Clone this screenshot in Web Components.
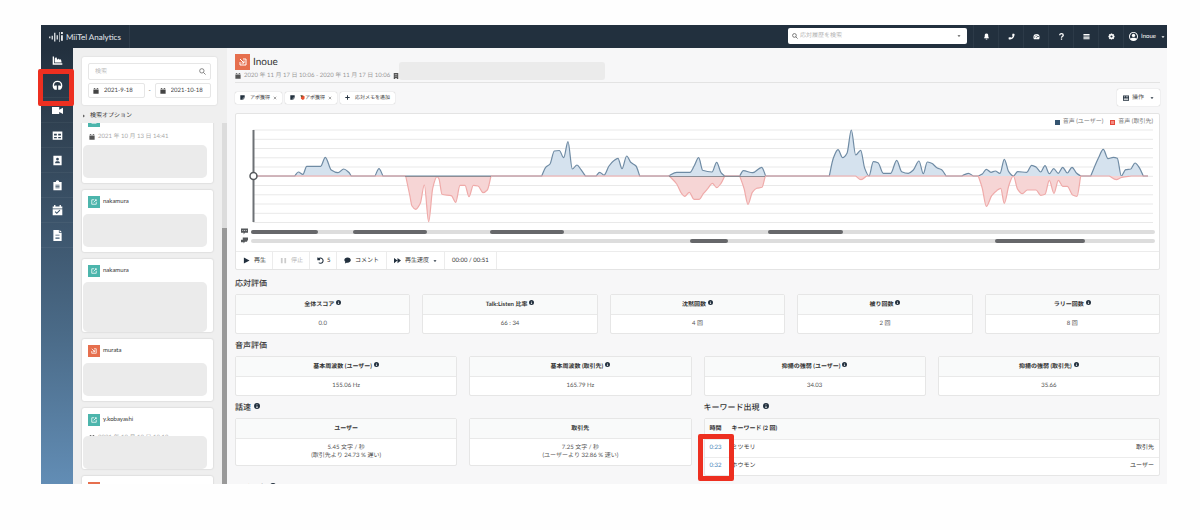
<!DOCTYPE html>
<html lang="ja">
<head>
<meta charset="utf-8">
<title>MiiTel Analytics</title>
<style>
body{margin:0;background:#fefefe;color:#333;font:6px/10px Lato,"Noto Sans CJK JP",sans-serif;text-rendering:geometricPrecision}
</style>
</head>
<body>
<analytics-page>
  <app-topbar slot="top"></app-topbar>
  <app-rail slot="rail"></app-rail>
  <call-list slot="list">
    <call-card date="2021 年 10 月 13 日 14:41"></call-card>
    <call-card name="nakamura"></call-card>
    <call-card name="nakamura" size="tall"></call-card>
    <call-card name="murata" kind="in"></call-card>
    <call-card name="y.kobayashi" date="2021 年 10 月 13 日 13:18" size="low"></call-card>
    <call-card name="murata" kind="in"></call-card>
  </call-list>
  <call-header></call-header>
  <call-tags></call-tags>
  <call-player></call-player>
  <metric-section label="応対評価">
    <metric-card label="全体スコア" info>0.0</metric-card>
    <metric-card label="Talk:Listen 比率" info>66 : 34</metric-card>
    <metric-card label="沈黙回数" info>4 回</metric-card>
    <metric-card label="被り回数" info>2 回</metric-card>
    <metric-card label="ラリー回数" info>8 回</metric-card>
  </metric-section>
  <metric-section label="音声評価">
    <metric-card label="基本周波数 (ユーザー)" info>155.06 Hz</metric-card>
    <metric-card label="基本周波数 (取引先)" info>165.79 Hz</metric-card>
    <metric-card label="抑揚の強弱 (ユーザー)" info>34.03</metric-card>
    <metric-card label="抑揚の強弱 (取引先)" info>35.66</metric-card>
  </metric-section>
  <split-row>
    <metric-section label="話速" info>
      <metric-card label="ユーザー">5.45 文字 / 秒<br>(取引先より 24.73 % 遅い)</metric-card>
      <metric-card label="取引先">7.25 文字 / 秒<br>(ユーザーより 32.86 % 速い)</metric-card>
    </metric-section>
    <metric-section label="キーワード出現" info>
      <keyword-table></keyword-table>
    </metric-section>
  </split-row>
  <metric-section label="コメント" info></metric-section>
</analytics-page>

<script>
const ICONS = {
  area:'<path d="M1 2v12h14v-2H3V2zM4 11V5l2-2 2 4 2-2 1 2 2-1 1 5z"/>',
  headset:'<path d="M8 1a7 7 0 0 0-7 7c0 3 1 5 3 6h3V8H5v0c-1 0-1 0-2 1V8a5 5 0 0 1 10 0v1c-1-1-1-1-2-1H9v6h3c2-1 3-3 3-6a7 7 0 0 0-7-7z"/>',
  video:'<path d="M0 3h10.500v4L16 4v9l-5.500-3v3H0z"/>',
  table:'<path fill-rule="evenodd" d="M1 2h14v12H1zM3 5.500v2.500h4V5.500zm6 0v2.500h4V5.500zM3 10v2h4v-2zm6 0v2h4v-2z"/>',
  contact:'<path fill-rule="evenodd" d="M2 1h12v14H2zM8 4a2 2 0 1 0 0 4 2 2 0 0 0 0-4zM4.500 12h7c0-2-1-3-2-3h-3c-1 0-2 1-2 3z"/>',
  clipboard:'<path fill-rule="evenodd" d="M2 3h3.500a2.500 2.500 0 0 1 5 0H14v12H2zM5 7v1h6V7zm0 2v1h6V9zm0 2v1h6v-1z"/>',
  check:'<path fill-rule="evenodd" d="M3 2V0h2v2h6V0h2v2h2v3H1V2zM1 6h14v9H1zM5 9l-1 1 3 3 5-5-1-1-4 4z"/>',
  file:'<path fill-rule="evenodd" d="M2 0h8v4h4v12H2zM5 7v1h6V7zm0 3v1h6v-1zm0 2v1h6v-1z"/><path d="M11 0l3 3h-3z"/>',
  calendar:'<path d="M3 2V0h2v2h6V0h2v2h2v2H1V2zM1 5h14v10H1z"/>',
  search:'<path fill="none" stroke="currentColor" stroke-width="2" d="M6.500 1.500a5 5 0 1 1 0 10 5 5 0 0 1 0-10zM10 10l5 5"/>',
  bell:'<path d="M8 1c4 0 4 3 4 6s1 3 2 5H2c1-2 2-2 2-5s0-6 4-6zM6 13h4a2 2 0 0 1-4 0z"/>',
  phone:'<path d="M11 1l4 1c0 8-5 13-13 13l-1-4 4-2 2 2c2-1 3-2 4-4L9 5z"/>',
  gauge:'<path fill-rule="evenodd" d="M8 2a7 7 0 0 0-7 7c0 2 0 3 1 5h12c1-2 1-3 1-5a7 7 0 0 0-7-7zM3 8h2v2H3zm3-4h2v2H6zm5 3h2v2h-2zM7 12l3-6 1 .500-2 5z"/>',
  bars:'<path d="M1 2h14v3H1zm0 4h14v2H1zm0 3h14v2H1zm0 3h14v2H1z"/>',
  gear:'<path fill-rule="evenodd" d="M6.500 1h3l.500 2 2-1 2 2-1 2 2 .500v3L13 10l1 2-2 2-2-1-.500 2h-3L6 13l-2 1-2-2 1-2-2-.500v-3L3 6 2 4l2-2 2 1zM8 5.500a2.500 2.500 0 1 0 0 5 2.500 2.500 0 0 0 0-5z"/>',
  help:'<path fill="none" stroke="currentColor" stroke-width="3" d="M4 5c0-5 8-4 8 0 0 3-4 2-4 6"/><path d="M6.500 12.500h3v3h-3z"/>',
  user:'<path fill-rule="evenodd" d="M8 0a8 8 0 1 0 0 16A8 8 0 0 0 8 0zm0 1.500a6.500 6.500 0 0 1 5 10.500c-1-2-2-2-5-2s-4 0-5 2A6.500 6.500 0 0 1 8 1.500z"/><circle cx="8" cy="6" r="3"/>',
  caret:'<path d="M2 5h12l-6 7z"/>',
  right:'<path d="M5 2l6 6-6 6z"/>',
  note:'<path d="M1 1h14v8h-6v6H1zM10 15v-5h5z"/>',
  plus:'<path d="M6.500 1h3v5.500H15v3H9.500V15h-3V9.500H1v-3h5.500z"/>',
  close:'<path fill="none" stroke="currentColor" stroke-width="3" d="M3 3l10 10M13 3L3 13"/>',
  play:'<path d="M2 1l13 7-13 7z"/>',
  pause:'<path d="M2 2h4v12H2zm8 0h4v12h-4z"/>',
  undo:'<path fill="none" stroke="currentColor" stroke-width="2.500" d="M2 1v5h5M3 5a6 6 0 1 1 1 8"/>',
  comment:'<path d="M8 1c10 0 10 12 0 12l-2 0-4 2 1-4C-2 7 2 1 8 1z"/>',
  fast:'<path d="M0 2l8 6-8 6zM8 2l8 6-8 6z"/>',
  info:'<path fill-rule="evenodd" d="M8 0a8 8 0 1 0 0 16A8 8 0 0 0 8 0zM7 3h2v2H7zM6 7h3v4h1v2H6v-2h1V8H6z"/>',
  building:'<path fill-rule="evenodd" d="M2 0h12v16h-4v-3H6v3H2zM5 3v2h2V3zm4 0v2h2V3zM5 7v2h2V7zm4 0v2h2V7z"/>',
  panel:'<path fill-rule="evenodd" d="M0 1h16v14H0zM2 4v2h4V4zm6 0v2h6V4zM2 8v1h12V8zm0 3v2h12v-2z"/>',
  say:'<path fill-rule="evenodd" d="M0 1h16v10H9l-3 4v-4H0zM3 5v2h2V5zm4 0v2h2V5zm4 0v2h2V5z"/>',
  reply:'<path d="M4 1h12v7h-2v3H9l-3 4v-3H0V6h4z"/>',
  out:'<path fill="none" stroke="currentColor" stroke-width="2" d="M8 2H2v12h12V8M10 2h4v4M14 2L7 9"/>',
  in:'<path fill="none" stroke="currentColor" stroke-width="2" d="M8 2h6v12H2V8M2 2l8 8M10 5v5H5"/>',
  apple:'<path fill="#e8502f" d="M3 3l6-2 6 4-1 8-5 3-6-4z"/><path fill="#4b5d3a" d="M1 1l6 0 2 4-5 1z"/>',
  wave:'<path d="M0 7h2v3H0zM4 6h2v6H4zM8 1h2v14H8zM12 5h2v7h-2zM16 0h1v16h-1zM19 5h3v9h-3zM19 0h3v3h-3z"/>'
};
const icon = (name, cls = '') => `<svg class="i ${cls}" viewBox="0 0 ${name === 'wave' ? 22 : 16} 16" fill="currentColor" aria-hidden="true">${ICONS[name]}</svg>`;
const BASE = `*,:host{box-sizing:border-box}
  .i{display:block;width:6px;height:6px;flex:none}
  button,input{font:inherit;color:inherit;margin:0;border:0;background:none;padding:0;text-rendering:inherit}
  button{display:flex;align-items:center;cursor:pointer;white-space:nowrap}
  input{outline:0;min-width:0;width:100%}
  a{color:inherit;text-decoration:none}`;
const define = (tag, render) => customElements.define(tag, class extends HTMLElement {
  constructor(){ super(); this.attachShadow({mode:'open'}); }
  connectedCallback(){
    const t = document.createElement('template');
    const [css, html] = render(this);
    t.innerHTML = `<style>${BASE}${css}</style>${html}`;
    this.shadowRoot.replaceChildren(t.content.cloneNode(true));
  }
});

define('analytics-page', () => [`
  :host{display:grid;height:100vh;padding:25px 33px 46px 41px;grid-template:23px minmax(0,1fr)/32px 154px minmax(0,1fr)}
  .top{grid-column:1/-1}
  .rail,.list{display:grid;min-height:0;grid-template-rows:minmax(0,1fr)}
  .rail{position:relative;z-index:1}
  main{background:#f7f7f8;padding:0 7px 0 8px;overflow:hidden;min-height:0}`,
  `<div class="top"><slot name="top"></slot></div><div class="rail"><slot name="rail"></slot></div><div class="list"><slot name="list"></slot></div><main><slot></slot></main>`]);

define('app-topbar', () => [`
  :host{display:flex;height:23px;background:#22303e;color:#fff;align-items:stretch}
  .brand{display:flex;align-items:center;gap:3px;width:89px;padding-left:8px;font-size:8px;border-right:1px solid #2e3c4a;color:#e8ebee}
  .brand .i{width:14px;height:10px}
  .find{display:flex;align-items:center;gap:2px;width:179px;height:16px;margin:3px 6px auto auto;background:#fff;border-radius:2px;padding:0 6px 0 4px;color:#555}
  .find input::placeholder{color:#b5b5b5;opacity:1}
  .find .c{width:4px;height:4px}
  nav{display:flex}
  nav button{width:25px;justify-content:center;border-left:1px solid #2c3a48}
  nav .i{width:7px;height:7px}
  nav .user{width:44px;gap:3px;padding-left:3px}
  nav .user .i{width:9px;height:9px}
  nav .user .c{width:4px;height:4px;margin-left:2px}`,
  `<a class="brand" href="#">${icon('wave')}MiiTel Analytics</a>
  <label class="find">${icon('search')}<input aria-label="応対履歴を検索" placeholder="応対履歴を検索">${icon('caret','c')}</label>
  <nav>${[['bell','通知'],['phone','電話'],['gauge','状況'],['help','ヘルプ'],['bars','メニュー'],['gear','設定']].map(([n,l])=>`<button aria-label="${l}">${icon(n)}</button>`).join('')}<button class="user">${icon('user')}Inoue${icon('caret','c')}</button></nav>`]);

define('app-rail', () => [`
  :host{display:block;background:linear-gradient(#22303e,#314354 20%,#3c546b 40%,#4a6a87 65%,#628db5);color:#fff}
  a{position:relative;display:flex;height:25px;align-items:center;justify-content:center;border-bottom:1px solid #ffffff0c}
  .i{width:11px;height:11px}
  .mark{position:absolute;inset:-4px -1px -9px -3px;border:5px solid #ed2f20;border-radius:2px;z-index:1}`,
  ['area','headset','video','table','contact','clipboard','check','file'].map(n=>`<a href="#" aria-label="${n}">${icon(n)}${n==='headset'?'<span class="mark"></span>':''}</a>`).join('')]);

define('call-list', () => [`
  :host{display:flex;flex-direction:column;background:#efefef;min-height:0;padding-top:9px}
  form{flex:none;margin:0 10px 0 9px;height:48px;background:#fff;border-radius:2px;box-shadow:0 0 2px #0002;padding:6px}
  .box{display:flex;align-items:center;gap:4px;border:1px solid #e6e6e6;border-radius:2px;padding:0 4px;color:#444}
  .q{height:17px;padding:0 4px 0 6px;margin-bottom:3px;color:#777}
  .q .i{width:7px;height:7px}
  .q input::placeholder{color:#bbb;opacity:1}
  .dates{display:grid;grid-template-columns:1fr 10px 1fr;text-align:center;line-height:15px}
  .dates .box{height:15px;gap:5px}
  .opt{flex:none;margin:6px 9px 2px;height:10px;gap:4px}
  .opt .i{width:4px;height:4px}
  .wrap{flex:1;display:flex;min-height:0;overflow:hidden;justify-content:space-between}
  .items{width:131px;margin:-14px 0 0 9px;display:flex;flex-direction:column;gap:7px}
  .bar{width:5px;background:#dcdcdc;display:grid;grid-template-rows:29% 1fr}
  .bar span{background:#999;grid-row:2}`,
  `<form><label class="box q"><input aria-label="検索" placeholder="検索">${icon('search')}</label>
  <div class="dates"><label class="box">${icon('calendar')}<input aria-label="開始日" value="2021-9-18"></label><span>-</span><label class="box">${icon('calendar')}<input aria-label="終了日" value="2021-10-18"></label></div></form>
  <button class="opt">${icon('right')}検索オプション</button>
  <div class="wrap"><div class="items"><slot></slot></div><div class="bar"><span></span></div></div>`]);

define('call-card', el => {
  const size = el.getAttribute('size'), kind = el.getAttribute('kind') || 'out', date = el.getAttribute('date');
  const top = date ? 'dated' : size === 'tall' ? 'near' : '';
  return [`
  :host{display:block;flex:none;background:#fff;border-radius:2px;box-shadow:0 0 2px #0003;padding:6px 6px ${size?0:5}px 1px}
  .who{display:flex;align-items:center;gap:3px;height:12px;padding-left:5px}
  .who span{display:grid;place-items:center;width:12px;height:12px;color:#fff;background:${kind==='in'?'#e66f4e':'#4cb5ac'}}
  .date{display:flex;align-items:flex-start;gap:3px;height:${size==='low'?10:18}px;padding:${size==='low'?7:5}px 0 0 6px;color:#aaa}
  .date .i{color:#555;margin-top:2px}
  .hide{position:relative;height:${size==='tall'?50:33}px;margin-top:6px;background:#ebebeb;border-radius:5px}
  .near{margin-top:5px}.dated{margin-top:0}`,
  `<div class="who"><span>${icon(kind)}</span>${el.getAttribute('name')||''}</div>
  ${date?`<div class="date">${icon('calendar')}${date}</div>`:''}<div class="hide ${top}"></div>`];
});

define('call-header', () => [`
  :host{display:flex;align-items:flex-end;padding-top:6px;height:35px;border-bottom:1px solid #e3e3e3}
  h1{display:flex;align-items:center;gap:3px;margin:0;font:10px/16px Lato,sans-serif;color:#333}
  h1 span{display:grid;place-items:center;width:15px;height:16px;background:#e66f4e;color:#fff}
  h1 .i{width:8px;height:8px}
  p{display:flex;align-items:center;gap:3px;margin:0;height:12px;color:#999;white-space:nowrap}
  p .i{color:#555}
  .left{flex:none}
  .hide{flex:0 1 206px;height:18px;background:#ebebeb;border-radius:3px;margin-bottom:2px}`,
  `<div class="left"><h1><span>${icon('in')}</span>Inoue</h1><p>${icon('calendar')}2020 年 11 月 17 日 10:06 - 2020 年 11 月 17 日 10:06${icon('building')}</p></div><div class="hide"></div>`]);

define('call-tags', () => [`
  :host{display:flex;align-items:center;gap:3px;padding:6px 0 7px;font-size:5px}
  button{height:12px;background:#fff;border-radius:2px;box-shadow:0 0 1px #0005;padding:0 5px;color:#333}
  .i{width:5px;height:5px;color:#22303e}
  .n{margin-right:5px}
  .x{width:4px;height:4px;margin-left:3px;color:#888}
  .op{height:17px;margin-left:auto;padding:0 6px;font-size:6px;gap:3px;color:#555}
  .op .i{width:6px;height:6px}.op .c{width:4px;height:4px;margin-left:3px}`,
  `<button>${icon('note','n')}アポ獲得${icon('close','x')}</button><button>${icon('note','n')}${icon('apple')}アポ獲得${icon('close','x')}</button><button>${icon('plus','n')}応対メモを追加</button><button class="op">${icon('panel')}操作${icon('caret','c')}</button>`]);

const USER = [[294.7,176,298.3,172,303,174.3,306.7,166.3,320.7,166.3,325.3,157.3,331.3,170,338,172.7,343.7,169,348.7,172.3,351.3,176],
[375,176,379,168.7,383,176],
[541.7,176,545.7,167.3,550,164,554.3,151,559.3,150.5,563.7,157.7,568,141.7,572.3,169,577,165,581,169.7,585.3,176],
[596,176,599.7,172.3,604,175,609,166,614,160.5,618,158.3,622,168.7,626.7,156,630.7,162.3,636,166,639.7,176],
[668.3,176,676.7,172.3,690,172.3,694,166.3,698.7,157.7,702.7,170.3,712,172,716.7,162.3,721,172.7,724.7,176],
[739.7,176,743.3,170.7,752.7,172.7,761.7,167.3,765.7,176],
[829.3,176,833.3,158.3,838,149.7,842.7,157.7,847,153.3,851.3,130,855.7,155,860.7,150.3,864.7,168.3,869,176,873.3,161.7,878,162.7,883.3,173.3,890.7,173.3,896.7,160.3,901.7,171.7,908.3,173.3,913.3,170,919,161,923.3,173.7,927.3,162,931.7,163.3,937.3,168,941.7,169.7,946,176],
[961.7,176,968.3,173.3,973.3,176],
[978.3,176,982.3,174,986.3,169.3,991,172.3,995.3,171,1000,173.3,1004.3,159.3,1008.7,171.7,1013.3,176,1017.7,171.7,1026.7,172.3,1031.7,165.3,1036,167,1040.7,172,1045,165.7,1049.3,173.7,1053.7,168.7,1058.3,173.3,1062.7,167.3,1067.3,173,1072,167.3,1076.7,173.3,1080.7,176],
[1090.7,176,1098.3,158.3,1103.3,149.3,1108,158.7,1113.3,157.3,1117.3,158.3,1121.3,176,1125.7,169.7,1130.7,169,1135,163,1139.3,167.7,1143.3,176]];
const CLIENT = [[405.7,176,409.7,195,412,206,415.7,209.3,420.3,203.3,424.3,185,428.7,221.7,432.7,188.3,437,176.7,439,179,442,194.3,451.3,195.7,455.7,202.3,460,185.3,465,185.3,469,196.7,473.3,185.3,478,186,483,192.7,487.3,190,491,176],
[669.3,176,676.7,184,681.7,193.7,684.7,196.3,689.3,192.3,694,199.3,699.3,199.3,703.3,193.7,707.7,188.7,712.3,183.3,716.7,187.7,721,183.3,724.7,176],
[739.7,176,744,188.3,748,204.3,752.3,192.3,756.7,188.3,762,187.3,765.3,176],
[855.7,176,861,179.7,866.7,176],
[978.3,176,982.3,188.3,986.3,206.3,991.7,195.7,996.7,190.7,1000.7,188.3,1004.3,203.3,1009,185,1013.3,176,1017.7,189.3,1022.3,193.7,1027.3,190,1036,190,1040.7,195.3,1045,194.3,1049.3,180.3,1054,193.3,1058.3,180.3,1062.7,186.3,1067.3,186.3,1072.7,195,1077,196.3,1080.7,176],
[1109.3,176,1116.3,179.7,1121.7,177.3,1131,176]];
/* Horizontal tangents at turning points, so that peaks are rounded and never overshoot. */
const smooth = a => {
  const n = a.length/2, X = i => a[2*i], Y = i => a[2*i+1];
  const s = i => (Y(i+1)-Y(i))/(X(i+1)-X(i));
  const m = i => i===0||i===n-1 ? 0 : s(i-1)*s(i)<=0 ? 0 : 2*s(i-1)*s(i)/(s(i-1)+s(i));
  let d = `${X(0)} ${Y(0)}`;
  for (let i=0;i<n-1;i++){ const h=(X(i+1)-X(i))/3, e=i===0, l=i===n-2;
    const m0=e?s(0):m(i), m1=l?s(i):m(i+1);
    d += `C${(X(i)+h).toFixed(1)} ${(Y(i)+h*m0).toFixed(1)} ${(X(i+1)-h).toFixed(1)} ${(Y(i+1)-h*m1).toFixed(1)} ${X(i+1)} ${Y(i+1)}`; }
  return d;
};
const trace = runs => 'M253 176' + runs.map(r=>'L'+smooth(r)).join('') + 'L1148 176';

define('wave-chart', () => [`
  :host{display:block}
  svg{display:block;width:100%;height:99px}
  path,line{vector-effect:non-scaling-stroke}`,
  `<svg viewBox="236 128 923 99" preserveAspectRatio="none" role="img" aria-label="音声">
  ${Array.from({length:11},(_,i)=>`<line x1="253" x2="1153" y1="${(130+9.25*i).toFixed(1)}" y2="${(130+9.25*i).toFixed(1)}" stroke="#e9e9e9"/>`).join('')}
  <path d="${trace(USER)}" fill="#d5e2ee" stroke="#6f8ba4" stroke-width="1.200"/>
  <path d="${trace(CLIENT)}" fill="#f6d5d5" stroke="#efaaa9" stroke-width="1.200"/>
  <path d="M405 176.500H491M669 176.500H765" stroke="#8d8c93"/>
  <line x1="253.500" x2="253.500" y1="130" y2="222" stroke="#6d7175" stroke-width="2"/>
  <circle cx="253.500" cy="176" r="3.500" fill="#fff" stroke="#55595c" stroke-width="1.500"/></svg>`]);

define('call-player', () => [`
  :host{display:block;background:#fff;border:1px solid #e4e4e4;border-radius:2px}
  .legend{display:flex;justify-content:flex-end;align-items:center;gap:3px;height:14px;padding:2px 6px 0 0;color:#777}
  .legend i{width:5px;height:5px;background:#355470}
  .legend .r{background:#f28b82;border:1px dashed #e5483a;margin-left:4px}
  .row{display:flex;align-items:center;gap:2px;height:9px;padding:0 4px;color:#55585b}
  .row .i{width:9px;height:7px}
  .track{flex:1;display:flex;height:4px;border-radius:2px;background:#ddd}
  .track span{height:4px;border-radius:2px;background:#66676a;flex:none}
  .bar{display:flex;height:18px;margin-top:6px;border-top:1px solid #ececec;color:#333}
  .bar > *{display:flex;align-items:center;gap:4px;padding:0 0 0 7px;border-right:1px solid #ececec;white-space:nowrap}
  .bar .i{width:7px;height:7px;color:#22303e}
  .bar .c{width:4px;height:4px}
  .bar button:disabled{color:#bbb}.bar button:disabled .i{color:#ccc}
  .play{width:37px}.stop{width:37px}.undo{width:27px;gap:3px}.com{width:50px}.speed{width:58px}.time{width:52px}`,
  `<div class="legend"><i></i>音声 (ユーザー)<i class="r"></i>音声 (取引先)</div>
  <wave-chart></wave-chart>
  <div class="row">${icon('say')}<div class="track">${[[0,7.4],[3.9,8.2],[6.9,8.2],[22.6,8.3]].map(([m,w])=>`<span style="margin-left:${m}%;width:${w}%"></span>`).join('')}</div></div>
  <div class="row">${icon('reply')}<div class="track">${[[48.6,4.2],[29.5,10]].map(([m,w])=>`<span style="margin-left:${m}%;width:${w}%"></span>`).join('')}</div></div>
  <div class="bar"><button class="play">${icon('play')}再生</button><button class="stop" disabled>${icon('pause')}停止</button><button class="undo">${icon('undo')}5</button><button class="com">${icon('comment')}コメント</button><button class="speed">${icon('fast')}再生速度${icon('caret','c')}</button><span class="time">00:00 / 00:51</span></div>`]);

define('metric-section', el => [`
  :host{display:block;min-width:0}
  :host(:first-of-type){padding-top:2px}
  h2{display:flex;align-items:center;gap:3px;margin:0;font-size:8px;line-height:22px;font-weight:500;color:#333}
  h2 .i{color:#22303e;margin-bottom:2px}
  div{display:grid;grid-auto-flow:column;grid-auto-columns:minmax(0,1fr);gap:12px}`,
  `<h2>${el.getAttribute('label')}${el.hasAttribute('info')?icon('info'):''}</h2><div><slot></slot></div>`]);

define('split-row', () => [`:host{display:grid;grid-template-columns:minmax(0,1fr) minmax(0,1fr);gap:12px}
  ::slotted(*){padding-top:0!important}`, `<slot></slot>`]);

define('metric-card', el => [`
  :host{display:block;align-self:start;background:#fff;border:1px solid #e6e6e6;border-radius:2px;text-align:center;color:#555}
  h3{display:flex;justify-content:center;align-items:center;gap:2px;margin:0;height:20px;background:#f9fafa;border-bottom:1px solid #e9e9e9;font-size:6px;font-weight:700;color:#333}
  h3 .i{width:5px;height:5px;margin-bottom:4px;color:#22303e}
  div{padding:5px 0;line-height:8px}`,
  `<h3>${el.getAttribute('label')}${el.hasAttribute('info')?icon('info'):''}</h3><div><slot></slot></div>`]);

define('keyword-table', () => [`
  :host{display:block;position:relative;background:#fff;border:1px solid #e6e6e6;border-radius:2px}
  table{width:100%;border-collapse:collapse;text-align:left;line-height:8px}
  th,td{height:18px;padding:0;border-bottom:1px solid #ececec}
  th{height:20px;background:#f9fafa;color:#333}
  th:first-child,td:first-child{width:27px;padding-left:5px}
  td:last-child{text-align:right;padding-right:5px}
  tr:last-child td{border-bottom:0}
  a{color:#4a86b8}
  .mark{position:absolute;left:-7px;top:15px;width:36px;height:47px;border:5px solid #ed2f20;border-radius:2px;pointer-events:none}`,
  `<table><thead><tr><th scope="col">時間</th><th scope="col" colspan="2">キーワード (2 回)</th></tr></thead>
  <tbody><tr><td><a href="#">0:23</a></td><td>ミツモリ</td><td>取引先</td></tr><tr><td><a href="#">0:32</a></td><td>ホウモン</td><td>ユーザー</td></tr></tbody></table><span class="mark"></span>`]);
</script>
</body>
</html>
